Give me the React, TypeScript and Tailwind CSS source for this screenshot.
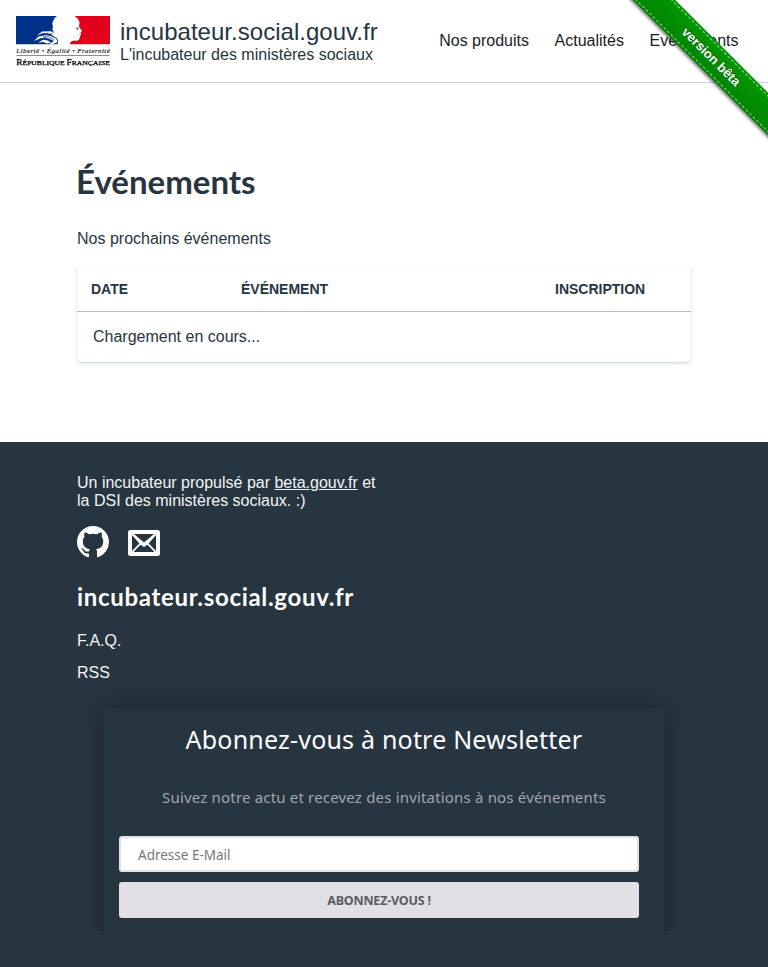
import type { ReactNode } from "react";

const sans = "font-['Liberation_Sans',Arial,sans-serif]";

function Logo() {
  return (
    <svg width="94" height="51" viewBox="0 0 94 51" className="block shrink-0" role="img" aria-label="République Française">
      <rect width="94" height="28.3" fill="#fff" />
      <path d="M0 0H41Q37.500 2 37 5Q35.500 8 37 11Q35.500 14 38 16.200L35 18.500L40.500 22Q43 24 41.500 28.300H0Z" fill="#003189" />
      <path d="M58.500 0H94V28.300H54Q54 25 58 24.500Q63 25.500 63.500 22.500L64 20L65.200 18.400L64.500 16.800L66 15L63 10.500Q64 7 63 4.500Q61.500 1.500 58.500 0Z" fill="#e2001a" />
      <path d="M21 19.500L26 15.500L35 15.300L38 17L33 17.800L27 17Z" fill="#fff" />
      <path d="M18 25L22.500 20.500L29 19.300Q34 19 39 22Q42 24 41 26.500L36 28.300L33 28.300L38 25Q33 22.300 29 21.500L24.500 22.300Z" fill="#fff" />
      <path d="M22 26.700L27 23.700Q32 23.500 35 26.500L31 27.500L27 26Z" fill="#fff" />
      <path d="M27 20.500Q33 20 38 23.500M30 17L36 19.500" fill="none" stroke="#003189" strokeWidth=".7" />
      <path d="M60 12.500Q61.500 11.300 63 12.300M61.700 12.500V14.200" fill="none" stroke="#444" strokeWidth=".8" />
      <path d="M62.500 18.500L64.500 18.200" fill="none" stroke="#999" strokeWidth=".6" />
      <text x="0.300" y="37" fontSize="6.900" fontStyle="italic" textLength="93.500" fill="#111" stroke="#111" strokeWidth=".15" fontFamily="Liberation Serif, serif">Liberté • Égalité • Fraternité</text>
      <rect x="0.500" y="39" width="93" height=".6" fill="#444" />
      <text x="0.300" y="48.800" fontSize="7.800" textLength="93.500" lengthAdjust="spacingAndGlyphs" fill="#000" stroke="#000" strokeWidth=".25" fontFamily="Liberation Serif, serif">
        R<tspan fontSize="6.400">ÉPUBLIQUE </tspan>F<tspan fontSize="6.400">RANÇAISE</tspan>
      </text>
    </svg>
  );
}

function NavLink({ children }: { children: ReactNode }) {
  return <a href="#" className="text-[#171e26]">{children}</a>;
}

function Header() {
  return (
    <header className="flex h-[83px] items-start justify-between border-b border-[#c9d3df] pl-4 pr-[29.5px]">
      <a href="#" className="flex gap-[10px] pt-4">
        <Logo />
        <span className="block pt-0.5">
          <span className="block text-2xl leading-[28px] tracking-[0.03px]">incubateur.social.gouv.fr</span>
          <span className="block leading-[18px]">L'incubateur des ministères sociaux</span>
        </span>
      </a>
      <nav className="flex gap-[25.6px] pt-8 leading-[18px]">
        <NavLink>Nos produits</NavLink>
        <NavLink>Actualités</NavLink>
        <NavLink>Evénements</NavLink>
      </nav>
    </header>
  );
}

function Ribbon() {
  return (
    <div className="pointer-events-none absolute right-0 top-0 h-[157px] w-[157px] overflow-hidden text-[13px] font-bold">
      <div className="absolute -right-[43px] top-[42px] h-[30px] w-[200px] rotate-45 bg-[#090] bg-gradient-to-b from-black/0 to-black/15 py-[2px] shadow-[0_2px_3px_0_rgba(0,0,0,0.5)]">
        <div className="h-[26px] border-y border-dashed border-white/60 text-center leading-[24px] text-white [text-shadow:0_-1px_rgba(0,0,0,0.5)]">version bêta</div>
      </div>
    </div>
  );
}

function Events() {
  return (
    <main className="h-[359px] px-[77px] pt-[76px]">
      <h1 className="-ml-px font-['Lato',sans-serif] text-[33px] font-bold leading-[44px]">Événements</h1>
      <p className="mt-[27px] leading-[18px]">Nos prochains événements</p>
      <table className="mt-[19px] block w-[614px] rounded-[3px] shadow-[0_1px_3px_rgba(60,100,150,0.3)]">
        <thead className="block border-b border-[#adbccc]">
          <tr className="flex h-[44px] items-center text-left text-sm">
            <th className="w-[150px] pl-[14px]">DATE</th>
            <th className="w-[314px] pl-[14px]">ÉVÉNEMENT</th>
            <th className="w-[150px] pl-[14px]">INSCRIPTION</th>
          </tr>
        </thead>
        <tbody className="block">
          <tr className="flex h-[50px] items-center"><td className="pl-4">Chargement en cours...</td></tr>
        </tbody>
      </table>
    </main>
  );
}

function GithubIcon() {
  return (
    <svg width="32" height="32" viewBox="0 0 16 16" fill="currentColor" aria-label="GitHub">
      <path d="M8 0C3.580 0 0 3.580 0 8c0 3.540 2.290 6.530 5.470 7.590.4.070.55-.17.55-.38 0-.19-.01-.82-.01-1.490-2.010.37-2.530-.49-2.690-.94-.09-.23-.48-.94-.82-1.130-.28-.15-.68-.52-.01-.53.63-.01 1.080.58 1.230.82.72 1.210 1.870.87 2.330.66.070-.52.28-.87.51-1.070-1.780-.2-3.640-.89-3.640-3.950 0-.87.31-1.590.82-2.150-.08-.2-.36-1.020.08-2.120 0 0 .67-.21 2.200.82.64-.18 1.320-.27 2-.27s1.360.09 2 .27c1.530-1.040 2.200-.82 2.200-.82.44 1.100.16 1.920.08 2.120.51.56.82 1.270.82 2.150 0 3.070-1.870 3.750-3.650 3.950.29.25.54.73.54 1.480 0 1.070-.01 1.930-.01 2.200 0 .21.15.46.55.38A8.010 8.010 0 0016 8c0-4.420-3.580-8-8-8z" />
    </svg>
  );
}

function MailIcon() {
  return (
    <svg width="32" height="26" viewBox="0 0 32 26" aria-label="E-mail">
      <path fillRule="evenodd" fill="currentColor" d="M2.500 0h27Q32 0 32 2.500v21Q32 26 29.500 26h-27Q0 26 0 23.500v-21Q0 0 2.500 0ZM6 4L16 12.500 26 4ZM4 5V21L11.300 13.500ZM28 5L20.700 13.500 28 21ZM5.500 22H26.500L19.500 14.800 16 17 12.500 14.800Z" />
    </svg>
  );
}

function Newsletter() {
  return (
    <section className="-mx-6 h-[246px] overflow-hidden px-6 pt-6 font-['Noto_Sans',sans-serif]">
      <form className="mx-auto h-[300px] w-[560px] bg-[#273541] px-[15px] pt-[11px] shadow-[0_0_20px_rgba(0,0,0,0.3)]">
        <h2 className="whitespace-nowrap text-center text-[25px] leading-[38px] tracking-[0.2px]">Abonnez-vous à notre Newsletter</h2>
        <p className="mt-[27px] whitespace-nowrap text-center text-[15px] leading-[24px] tracking-[0.18px] text-[#a2a7ad]">Suivez notre actu et recevez des invitations à nos événements</p>
        <input type="email" placeholder="Adresse E-Mail" className="mt-[27px] block h-9 w-[520px] rounded-[3px] border-2 border-[#e1e0e6] bg-white px-[17px] pt-[2px] text-[13.5px] placeholder:text-[#777]" />
        <button type="button" className="mt-[10px] block h-9 w-[520px] rounded-[3px] bg-[#e1e0e6] pt-[2px] text-[12.5px] font-bold tracking-[-0.2px] text-[#5c5b60]">ABONNEZ-VOUS !</button>
      </form>
    </section>
  );
}

function Footer() {
  return (
    <footer className="h-[525px] bg-[#273541] px-[77px] pt-[32px] text-white">
      <p className="leading-[18px] text-[#f2f4f5]">Un incubateur propulsé par <a href="#" className="underline">beta.gouv.fr</a> et<br />la DSI des ministères sociaux. :)</p>
      <div className="mt-4 flex h-8 items-center gap-[19px]">
        <GithubIcon />
        <span className="pt-[2px]"><MailIcon /></span>
      </div>
      <h2 className="mt-[23px] font-['Lato',sans-serif] text-[24px] font-bold leading-[32px] tracking-[0.68px]">incubateur.social.gouv.fr</h2>
      <ul className="mt-[12px] h-[64px] leading-[32px] text-[#f2f4f5]"><li>F.A.Q.</li><li>RSS</li></ul>
      <div className="-mt-[4px]"><Newsletter /></div>
    </footer>
  );
}

export default function App() {
  return (
    <div className={`relative h-[967px] w-[768px] overflow-hidden bg-white text-base text-[#273541] ${sans}`}>
      <Header />
      <Events />
      <Footer />
      <Ribbon />
    </div>
  );
}
